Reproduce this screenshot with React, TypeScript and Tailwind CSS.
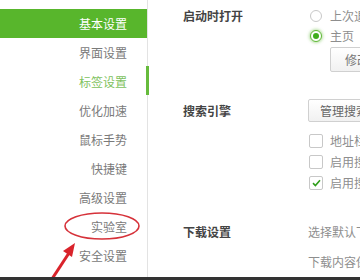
import React from 'react';

const NAV = ['基本设置', '界面设置', '标签设置', '优化加速', '鼠标手势', '快捷键', '高级设置', '实验室', '安全设置'];

function Radio({ checked }: { checked?: boolean }) {
  return checked ? (
    <span className="w-[12px] h-[12px] rounded-full border border-[#5fb836] bg-white flex items-center justify-center shadow-[0_0_3px_1px_rgba(95,184,54,0.45)]">
      <span className="w-[6px] h-[6px] rounded-full bg-[#3fae1c]" />
    </span>
  ) : (
    <span className="w-[12px] h-[12px] rounded-full border border-[#c8c8c8] bg-white" />
  );
}

function Checkbox({ checked }: { checked?: boolean }) {
  return (
    <span className="w-[14px] h-[14px] rounded-[2px] border border-[#c8c8c8] bg-white flex items-center justify-center">
      {checked && (
        <svg width="9" height="8" viewBox="0 0 9 8">
          <path d="M1 4.2 L3.4 6.5 L8 1.3" fill="none" stroke="#2f9e1a" strokeWidth="1.6" />
        </svg>
      )}
    </span>
  );
}

export default function App() {
  return (
    <div
      className="relative w-[360px] h-[280px] overflow-hidden bg-white flex flex-col"
      style={{ fontFamily: '"Noto Sans CJK SC", "Noto Sans", sans-serif' }}
    >
      <div className="flex h-[277px]">
        {/* 左侧导航 */}
        <div className="relative w-[148px] shrink-0 border-r border-[#e3e3e3] pt-[9px]">
          {NAV.map((item, i) => (
            <div
              key={item}
              className={`h-[29px] flex items-center justify-end pr-[20px] text-[12px] ${
                i === 0 ? 'bg-[#58b62c] text-white' : i === 2 ? 'text-[#80c25e]' : 'text-[#7a7a7a]'
              }`}
            >
              {item}
            </div>
          ))}
          <div className="absolute right-[-2px] top-[66px] w-[3px] h-[29px] bg-[#66bb3c]" />
        </div>

        {/* 右侧内容 */}
        <div className="flex-1 min-w-0 pl-[35px] pt-[6px] text-[12px] whitespace-nowrap">
          <div className="flex">
            <div className="w-[125px] shrink-0 h-[20px] flex items-center font-bold text-[12px] text-[#444]">启动时打开</div>
            <div className="flex flex-col text-[#8e8e8e]">
              <div className="h-[20px] flex items-center gap-[8px] pl-[2px]">
                <Radio />
                <span>上次退出前未关闭的网页</span>
              </div>
              <div className="h-[19px] flex items-center gap-[8px] pl-[2px]">
                <Radio checked />
                <span>主页</span>
              </div>
              <div className="mt-[2px] ml-[22px] h-[25px] w-[80px] border border-[#d0d0d0] rounded-[2px] bg-gradient-to-b from-white to-[#f1f1f1] flex items-center pl-[14px] text-[#777]">
                修改主页
              </div>
            </div>
          </div>

          <div className="flex mt-[27px]">
            <div className="w-[125px] shrink-0 h-[23px] flex items-center font-bold text-[12px] text-[#444]">搜索引擎</div>
            <div className="flex flex-col text-[#8e8e8e]">
              <div className="h-[23px] w-[110px] border border-[#d0d0d0] rounded-[2px] bg-gradient-to-b from-white to-[#f1f1f1] flex items-center pl-[11px] text-[#666]">
                管理搜索引擎
              </div>
              <div className="mt-[8px] flex flex-col pl-[1px]">
                <div className="h-[21px] flex items-center gap-[7px]">
                  <Checkbox />
                  <span>地址栏输入时显示搜索建议</span>
                </div>
                <div className="h-[21px] flex items-center gap-[7px]">
                  <Checkbox />
                  <span>启用搜索栏</span>
                </div>
                <div className="h-[21px] flex items-center gap-[7px]">
                  <Checkbox checked />
                  <span>启用搜索联想</span>
                </div>
              </div>
            </div>
          </div>

          <div className="flex mt-[29px]">
            <div className="w-[125px] shrink-0 h-[20px] flex items-center font-bold text-[12px] text-[#444]">下载设置</div>
            <div className="flex flex-col text-[#8e8e8e]">
              <div className="h-[20px] flex items-center">选择默认下载目录</div>
              <div className="h-[20px] mt-[10px] flex items-center">下载内容保存位置</div>
            </div>
          </div>
        </div>
      </div>

      {/* 标注：红圈与箭头 */}
      <svg className="absolute left-0 top-0 pointer-events-none" width="360" height="280" viewBox="0 0 360 280">
        <ellipse cx="102" cy="226" rx="37" ry="13" fill="none" stroke="#d6323a" strokeWidth="1.6" />
        <line x1="50" y1="282" x2="69" y2="253" stroke="#d9232b" strokeWidth="3" />
        <polygon points="75,243 63,251 72,257" fill="#d9232b" />
      </svg>

      <div className="relative h-[3px] bg-[#333333]" />
    </div>
  );
}
